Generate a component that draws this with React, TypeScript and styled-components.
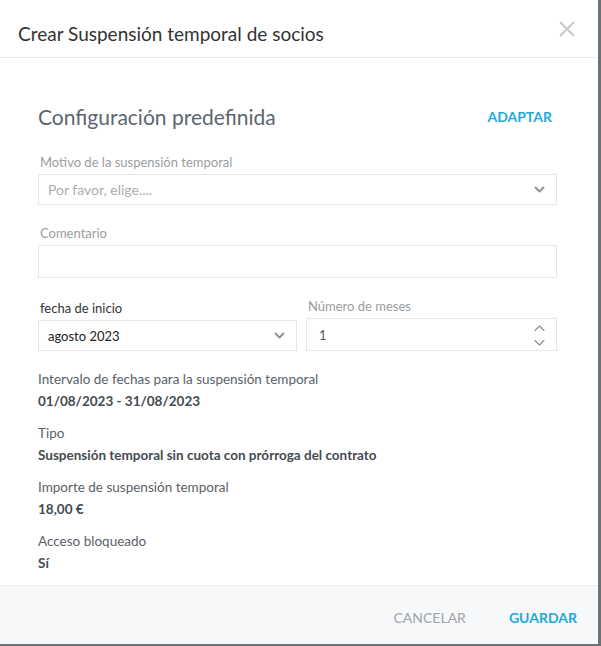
import React from "react";
import styled, { createGlobalStyle } from "styled-components";

const Global = createGlobalStyle`
  html, body { margin: 0; padding: 0; }
  body {
    background: #6f7275;
    font-family: Lato, "Noto Sans", Arial, sans-serif;
    -webkit-font-smoothing: antialiased;
  }
`;

const Backdrop = styled.div`
  width: 601px;
  height: 646px;
  overflow: hidden;
  background: #6f7275;
`;

const Dialog = styled.div`
  width: 598px;
  height: 644px;
  background: #fff;
  display: flex;
  flex-direction: column;
`;

const Header = styled.div`
  height: 59px;
  border-bottom: 1px solid #ececec;
  display: flex;
  align-items: center;
  justify-content: space-between;
  padding: 0 22px 0 18px;
  box-sizing: border-box;
`;

const Title = styled.h1`
  margin: 0;
  font-size: 19px;
  font-weight: 400;
  color: #333;
  padding-top: 10px;
`;

const Close = styled.button`
  border: 0;
  background: none;
  padding: 0;
  width: 18px;
  height: 18px;
  display: flex;
  cursor: pointer;
`;

const Body = styled.div`
  flex: 1;
  padding: 44px 41px 0 38px;
  display: flex;
  flex-direction: column;
`;

const SectionHead = styled.div`
  display: flex;
  align-items: center;
  justify-content: space-between;
  height: 28px;
  margin-bottom: 24px;
  padding-right: 5px;
`;

const SectionTitle = styled.h2`
  margin: 0;
  font-size: 21px;
  font-weight: 400;
  color: #5c6670;
`;

const LinkButton = styled.button<{ $size?: number; $muted?: boolean }>`
  border: 0;
  background: none;
  padding: 0;
  font-family: inherit;
  font-size: ${(p) => p.$size ?? 14}px;
  font-weight: ${(p) => (p.$muted ? 400 : 700)};
  color: ${(p) => (p.$muted ? "#a0a4a8" : "#21a9dc")};
  text-transform: uppercase;
  cursor: pointer;
`;

const Field = styled.div<{ $last?: boolean }>`
  display: flex;
  flex-direction: column;
  margin-bottom: ${(p) => (p.$last ? 0 : 20)}px;
`;

const Label = styled.label<{ $dark?: boolean }>`
  font-size: 13px;
  color: ${(p) => (p.$dark ? "#333" : "#9a9da1")};
  padding-left: 2px;
  margin-bottom: 4px;
  line-height: 16px;
`;

const Box = styled.div<{ $height?: number }>`
  height: ${(p) => p.$height ?? 31}px;
  border: 1px solid #e4e6e8;
  box-sizing: border-box;
  display: flex;
  align-items: center;
  justify-content: space-between;
  padding: 0 11px 0 9px;
`;

const Placeholder = styled.span`
  font-size: 14px;
  color: #a9adb1;
`;

const Value = styled.span<{ $soft?: boolean }>`
  font-size: 13px;
  color: ${(p) => (p.$soft ? "#555c63" : "#222")};
  padding-left: ${(p) => (p.$soft ? 3 : 0)}px;
`;

const Row = styled.div`
  display: grid;
  grid-template-columns: 259px 251px;
  column-gap: 9px;
  align-items: end;
  margin-bottom: 18px;
`;

const Spinner = styled.div`
  display: flex;
  flex-direction: column;
  gap: 9px;
  margin-top: 1px;
`;

const Info = styled.div`
  display: flex;
  flex-direction: column;
  margin-bottom: 11px;
`;

const InfoLabel = styled.span`
  font-size: 13.5px;
  color: #5a6168;
  line-height: 20px;
`;

const InfoValue = styled.span`
  font-size: 13.5px;
  font-weight: 700;
  color: #444b52;
  line-height: 21px;
  margin-top: 2px;
`;

const Footer = styled.div`
  height: 59px;
  background: #f7f8fa;
  border-top: 1px solid #eef0f2;
  display: flex;
  align-items: center;
  justify-content: flex-end;
  gap: 43px;
  padding: 5px 21px 0 0;
  box-sizing: border-box;
`;

const Chevron = ({ up = false, color = "#8a8f94" }: { up?: boolean; color?: string }) => (
  <svg width="11" height="6" viewBox="0 0 11 6" fill="none">
    <path
      d={up ? "M1 5.5L5.5 1L10 5.5" : "M1 0.5L5.5 5L10 0.5"}
      stroke={color}
      strokeWidth="1.1"
      strokeLinecap="round"
      strokeLinejoin="round"
    />
  </svg>
);

const BoldChevron = () => (
  <svg width="11" height="7" viewBox="0 0 11 7" fill="none">
    <path d="M1.5 1.5L5.5 5.5L9.5 1.5" stroke="#8d9297" strokeWidth="2" strokeLinecap="round" strokeLinejoin="round" />
  </svg>
);

const info = [
  { label: "Intervalo de fechas para la suspensión temporal", value: "01/08/2023 - 31/08/2023" },
  { label: "Tipo", value: "Suspensión temporal sin cuota con prórroga del contrato" },
  { label: "Importe de suspensión temporal", value: "18,00 €" },
  { label: "Acceso bloqueado", value: "Sí" },
];

export default function App() {
  return (
    <>
      <Global />
      <Backdrop>
        <Dialog>
          <Header>
            <Title>Crear Suspensión temporal de socios</Title>
            <Close aria-label="Cerrar">
              <svg width="18" height="18" viewBox="0 0 18 18">
                <path d="M2 2L16 16M16 2L2 16" stroke="#c4c6c8" strokeWidth="1.8" />
              </svg>
            </Close>
          </Header>
          <Body>
            <SectionHead>
              <SectionTitle>Configuración predefinida</SectionTitle>
              <LinkButton>Adaptar</LinkButton>
            </SectionHead>
            <Field>
              <Label>Motivo de la suspensión temporal</Label>
              <Box>
                <Placeholder>Por favor, elige....</Placeholder>
                <BoldChevron />
              </Box>
            </Field>
            <Field>
              <Label>Comentario</Label>
              <Box $height={33} />
            </Field>
            <Row>
              <Field $last>
                <Label $dark>fecha de inicio</Label>
                <Box>
                  <Value>agosto 2023</Value>
                  <BoldChevron />
                </Box>
              </Field>
              <Field $last>
                <Label>Número de meses</Label>
                <Box $height={33}>
                  <Value $soft>1</Value>
                  <Spinner>
                    <Chevron up />
                    <Chevron />
                  </Spinner>
                </Box>
              </Field>
            </Row>
            {info.map((i) => (
              <Info key={i.label}>
                <InfoLabel>{i.label}</InfoLabel>
                <InfoValue>{i.value}</InfoValue>
              </Info>
            ))}
          </Body>
          <Footer>
            <LinkButton $muted $size={14}>Cancelar</LinkButton>
            <LinkButton $size={14}>Guardar</LinkButton>
          </Footer>
        </Dialog>
      </Backdrop>
    </>
  );
}
